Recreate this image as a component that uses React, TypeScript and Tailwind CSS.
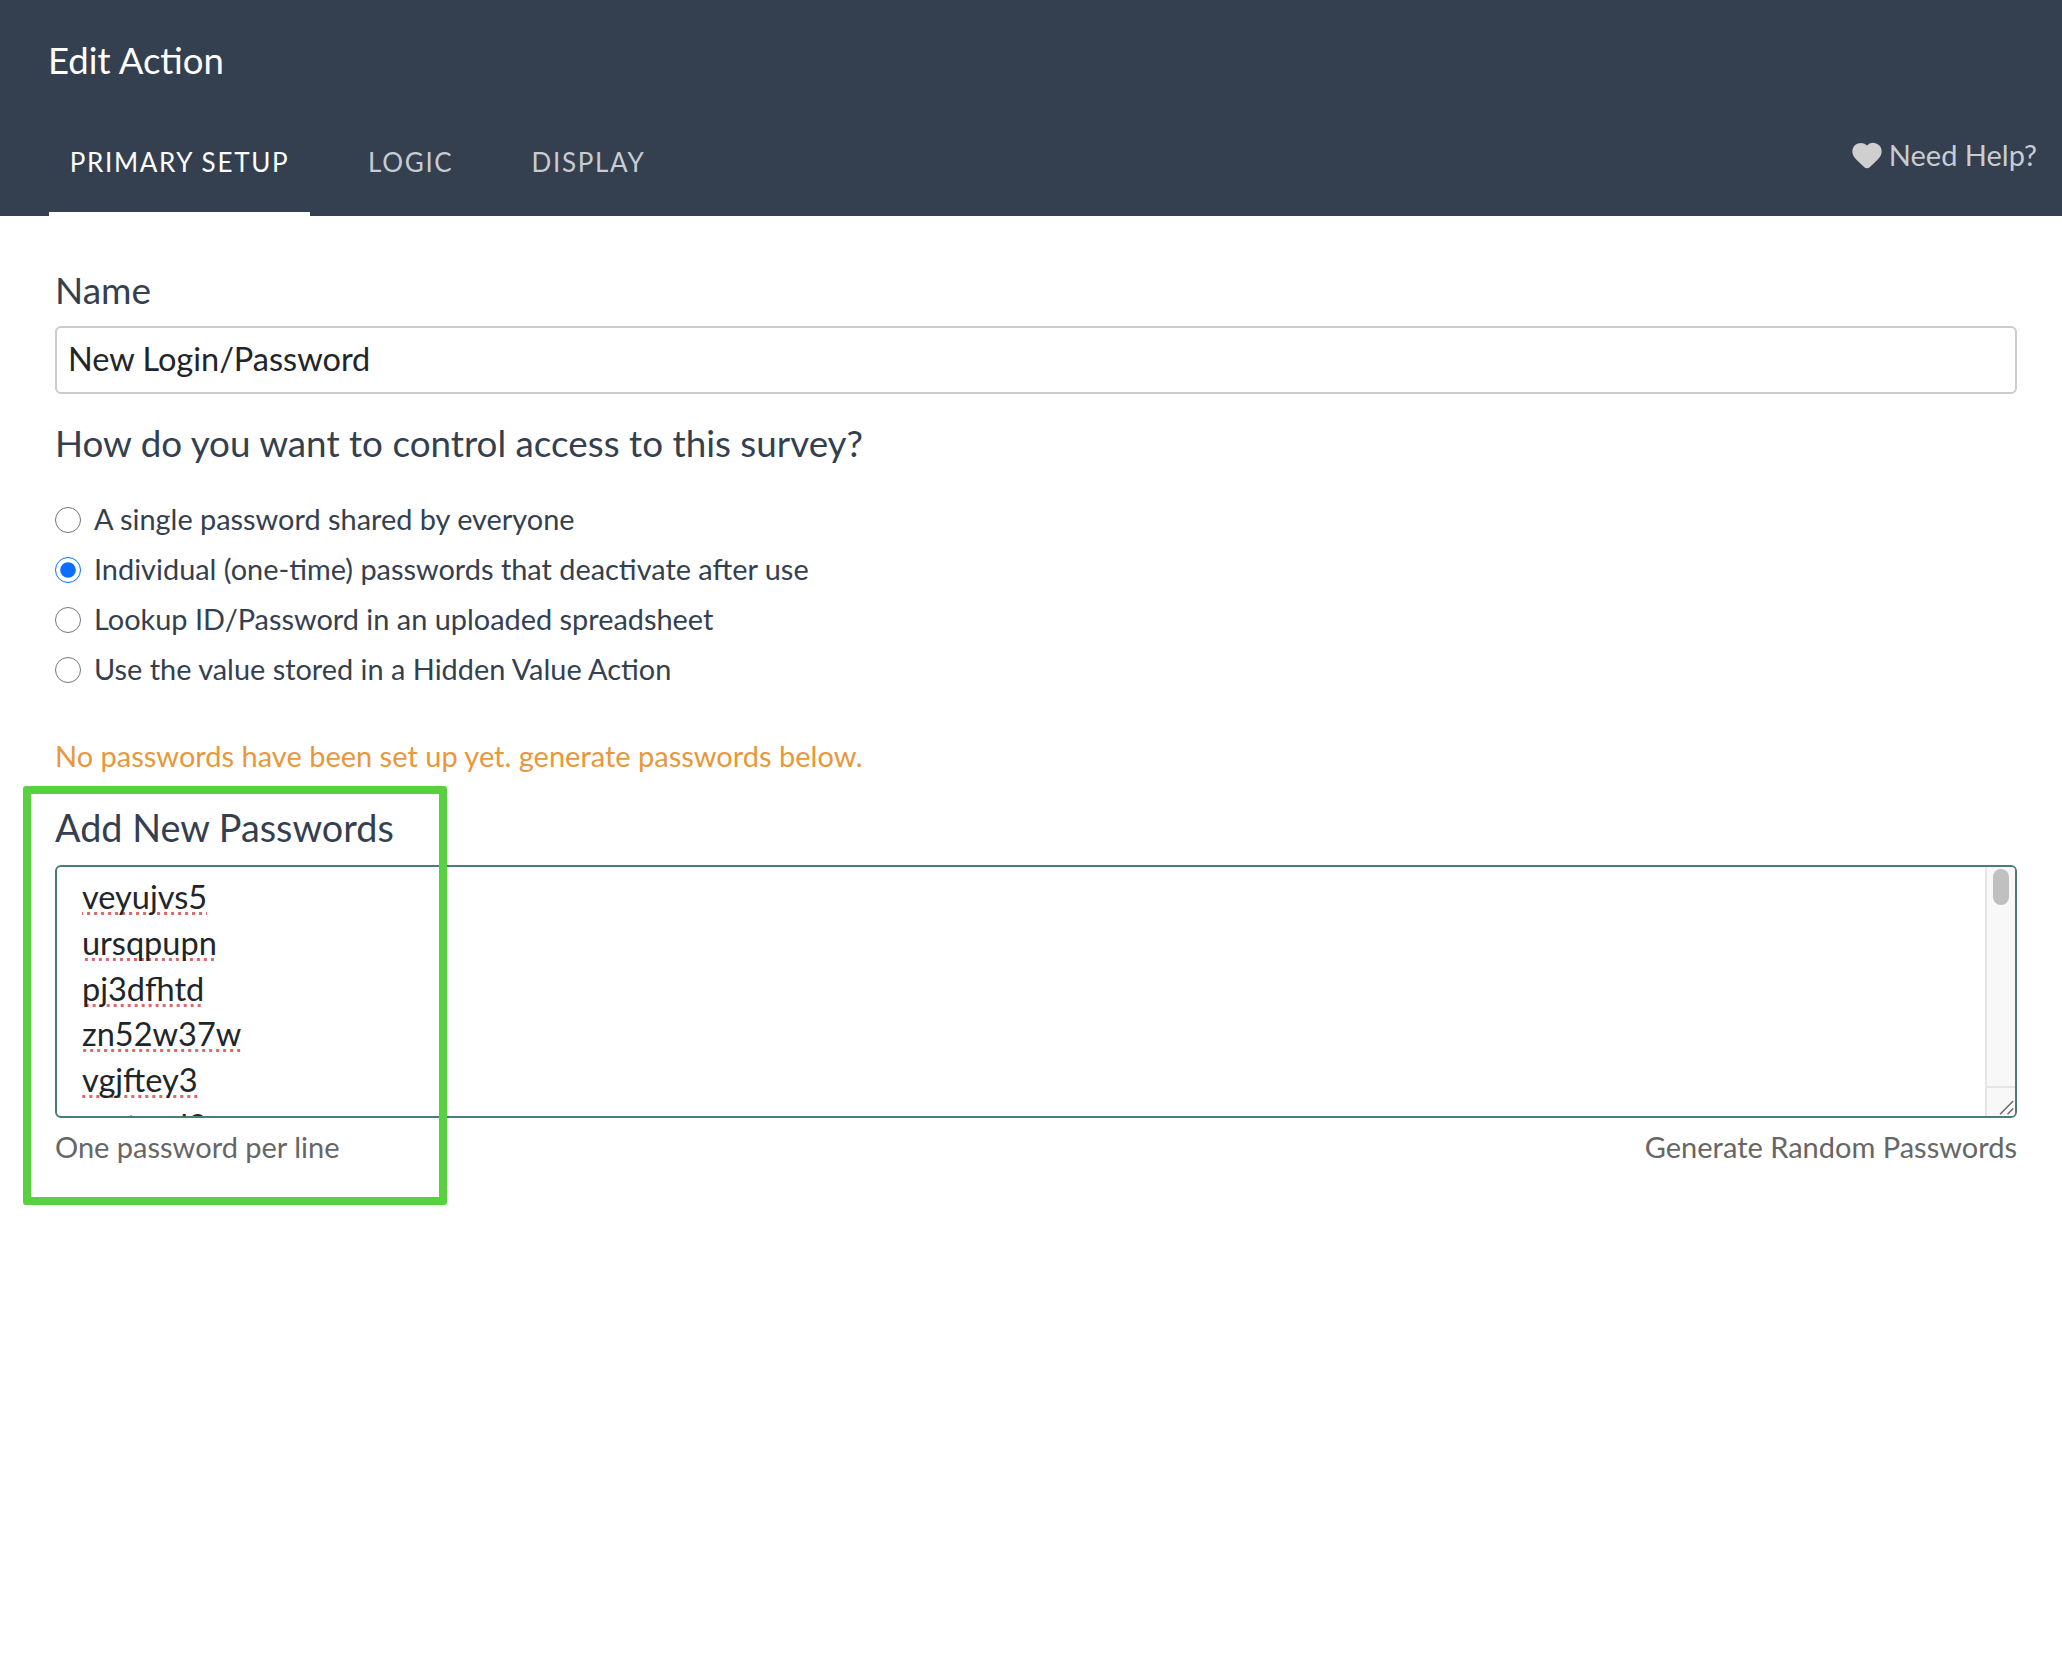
import React from 'react';
import { Heart } from 'lucide-react';

const passwords = ['veyujvs5', 'ursqpupn', 'pj3dfhtd', 'zn52w37w', 'vgjftey3', 'uwtxvd3'];

const options = [
  'A single password shared by everyone',
  'Individual (one-time) passwords that deactivate after use',
  'Lookup ID/Password in an uploaded spreadsheet',
  'Use the value stored in a Hidden Value Action',
];

const App: React.FC = () => {
  return (
    <div className="relative min-h-[1666px] bg-white font-['Lato','Noto_Sans',sans-serif] text-[#343f4f]">
      <header className="flex h-[216px] flex-col bg-[#343f4f] pl-[49px] pr-[25px]">
        <h1 className="-ml-[1px] mt-[38px] text-[36.5px] leading-[44px] font-normal text-white">Edit Action</h1>
        <div className="mt-[46px] flex items-start justify-between">
          <nav className="flex text-[26px] tracking-[1.7px]">
            <a className="flex h-[88px] w-[261px] items-start justify-center border-b-4 border-white pt-[15px] text-white">PRIMARY SETUP</a>
            <a className="ml-[58px] pt-[15px] text-[#c8ccd2]">LOGIC</a>
            <a className="ml-[78px] pt-[15px] text-[#c8ccd2]">DISPLAY</a>
          </nav>
          <div className="mt-[5px] flex items-center gap-[6px] text-[29px] text-[#c8ccd2]">
            <Heart className="h-[32px] w-[32px] fill-[#cfcfcf] text-[#cfcfcf]" />
            <span>Need Help?</span>
          </div>
        </div>
      </header>

      <main className="pl-[55px] pr-[45px]">
        <label className="mt-[53px] block text-[37px] leading-[42px]">Name</label>
        <input
          className="mt-[15px] block h-[68px] w-full rounded-[6px] border-2 border-[#cccccc] px-[11px] pb-[4px] text-[32.5px] text-[#212529] outline-none"
          defaultValue="New Login/Password"
        />
        <h2 className="mt-[27px] text-[36.8px] leading-[44px] font-normal">How do you want to control access to this survey?</h2>

        <div className="mt-[34px] flex flex-col gap-[10px] text-[28.9px]">
          {options.map((o, i) => (
            <label key={o} className="flex h-[40px] items-center gap-[13px]">
              <input type="radio" name="access" defaultChecked={i === 1} className="m-0 mt-[1px] h-[26px] w-[26px] accent-[#0d6efd]" />
              <span>{o}</span>
            </label>
          ))}
        </div>

        <p className="mt-[47px] text-[29px] leading-[40px] text-[#e8973a]">No passwords have been set up yet. generate passwords below.</p>

        <h3 className="mt-[30px] text-[37.8px] leading-[44px] font-normal">Add New Passwords</h3>
        <div className="relative mt-[15px] h-[253px] overflow-hidden rounded-[6px] border-2 border-[#4a7c78] pl-[25px] pt-[6px] text-[32.5px] text-[#212529]">
          {passwords.map((p) => (
            <div key={p} className="h-[45.75px]">
              <span className="inline-block h-[42px] bg-[radial-gradient(circle,#e06666_1.4px,transparent_1.9px)] bg-[length:7px_5px] bg-bottom bg-repeat-x leading-[46px]">{p}</span>
            </div>
          ))}
          <div className="absolute inset-y-0 right-0 flex w-[30px] flex-col border-l-2 border-[#e5e5e5] bg-[#f8f8f8]">
            <div className="mx-auto mt-[2px] h-[36px] w-[16px] rounded-full bg-[#c0c0c0]" />
            <div className="mt-auto h-[30px] border-t-2 border-[#e5e5e5]">
              <svg viewBox="0 0 30 28" className="h-full w-full" stroke="#666" strokeWidth="1.5" fill="none">
                <path d="M14 27 L28 13 M22 27 L28 21" />
              </svg>
            </div>
          </div>
        </div>
        <div className="mt-[11px] flex justify-between text-[29px] leading-[36px] text-[#666666]">
          <span>One password per line</span>
          <span>Generate Random Passwords</span>
        </div>
      </main>

      <div className="pointer-events-none absolute left-[23px] top-[786px] h-[419px] w-[424px] rounded-[3px] border-8 border-[#57d13f]" />
    </div>
  );
};

export default App;
